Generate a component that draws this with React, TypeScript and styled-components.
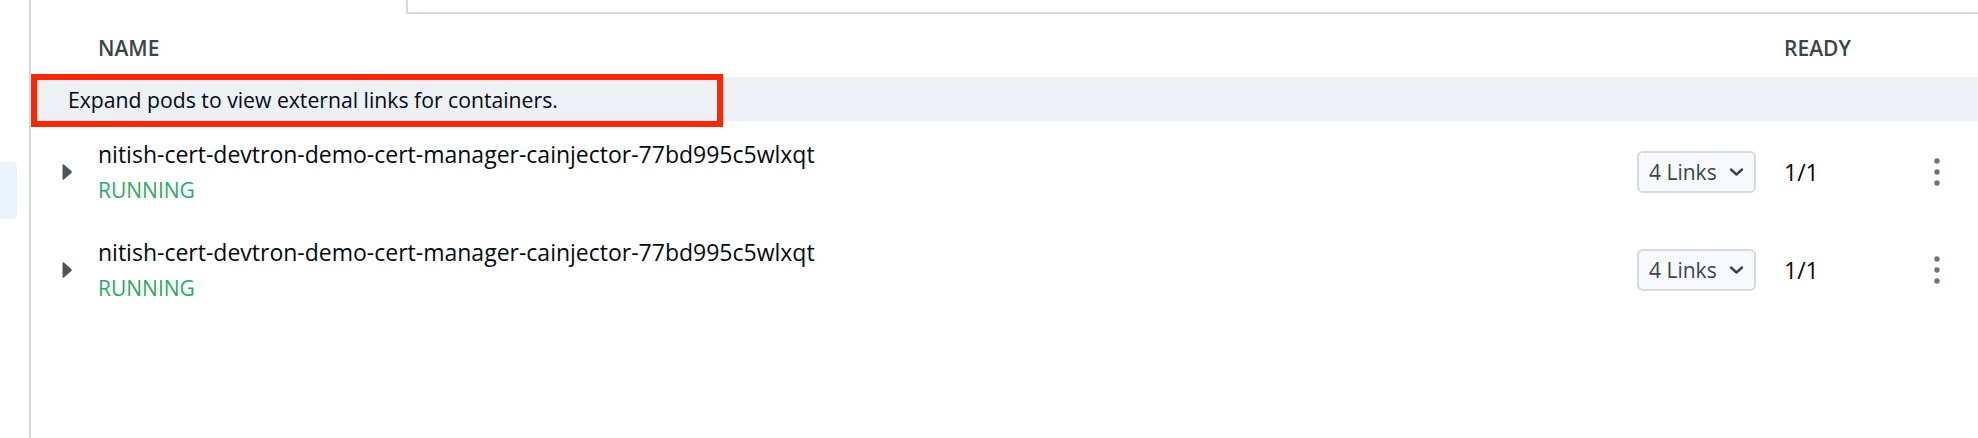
import styled, { createGlobalStyle } from 'styled-components';

const pods = [
	{ name: 'nitish-cert-devtron-demo-cert-manager-cainjector-77bd995c5wlxqt', status: 'RUNNING', links: 4, ready: '1/1' },
	{ name: 'nitish-cert-devtron-demo-cert-manager-cainjector-77bd995c5wlxqt', status: 'RUNNING', links: 4, ready: '1/1' },
];

const GlobalStyle = createGlobalStyle`
	html, body {
		margin: 0;
		padding: 0;
		background: #fff;
	}
	body {
		font-family: 'Open Sans', 'Noto Sans', sans-serif;
		font-size: 21px;
		color: #000a14;
	}
`;

const Page = styled.div`
	display: flex;
	width: 1978px;
	height: 438px;
	overflow: hidden;
`;

const Sidebar = styled.aside`
	width: 29px;
	flex-shrink: 0;
	border-right: 2px solid #d6dae0;
	padding-top: 162px;
	box-sizing: content-box;
`;

const SideTab = styled.div`
	width: 17px;
	height: 57px;
	background: #e8f3ff;
	border-radius: 0 5px 5px 0;
`;

const Main = styled.main`
	flex: 1;
	display: flex;
	flex-direction: column;
	min-width: 0;
`;

const TopStrip = styled.div`
	height: 12px;
	margin-left: 375px;
	border-left: 2px solid #d6dae0;
	border-bottom: 2px solid #d6dae0;
`;

const Row = styled.div<{ $header?: boolean }>`
	display: grid;
	grid-template-columns: 67px 1fr 147px 132px 42px;
	align-items: center;
	padding-right: 20px;
	padding-top: ${(p) => (p.$header ? '19px' : '18px')};
	padding-bottom: 14px;
`;

const HeadCell = styled.div<{ $col: number }>`
	grid-column: ${(p) => p.$col};
	font-size: 21px;
	line-height: 30px;
	font-weight: 600;
	color: #3b444c;
	text-transform: uppercase;
`;

const NoticeBand = styled.div`
	height: 44px;
	background: #edf0f4;
	display: flex;
	align-items: flex-end;
`;

const NoticeMark = styled.div`
	margin-left: 6px;
	width: 680px;
	height: 41px;
	box-sizing: border-box;
	outline: 6px solid #ff2600;
	display: flex;
	align-items: center;
	padding-left: 31px;
	padding-bottom: 2px;
	font-size: 21.2px;
	color: #000a14;
	white-space: nowrap;
`;

const Caret = styled.div`
	padding-left: 30px;
	align-self: center;
	display: flex;
	svg {
		display: block;
	}
`;

const PodInfo = styled.div`
	display: flex;
	flex-direction: column;
	gap: 6px;
	min-width: 0;
`;

const PodName = styled.div`
	font-size: 23px;
	line-height: 30px;
	color: #000a14;
	white-space: nowrap;
`;

const PodStatus = styled.div<{ $status: string }>`
	font-size: 21px;
	line-height: 30px;
	color: ${(p) => (p.$status === 'RUNNING' ? '#1dad70' : '#f33e3e')};
	text-transform: uppercase;
`;

const LinksButton = styled.button`
	width: 119px;
	height: 42px;
	box-sizing: border-box;
	display: flex;
	align-items: center;
	gap: 12px;
	padding: 0 0 0 10px;
	background: #f7fafc;
	border: 2px solid #d6dae0;
	border-radius: 6px;
	font-family: 'Open Sans', sans-serif;
	font-size: 21px;
	color: #3b444c;
	cursor: pointer;
`;

const ReadyCell = styled.div`
	font-size: 23px;
	line-height: 30px;
	color: #000a14;
`;

const MenuDots = styled.div`
	display: flex;
	justify-content: center;
`;

const CaretIcon = () => (
	<svg width='12' height='18' viewBox='0 0 12 18'>
		<path d='M1.5 2.2 Q1.5 0.6 2.9 1.6 L10.4 8 Q11.4 9 10.4 10 L2.9 16.4 Q1.5 17.4 1.5 15.8 Z' fill='#4d555e' />
	</svg>
);

const Chevron = () => (
	<svg width='15' height='10' viewBox='0 0 15 10'>
		<path d='M2 2.5 L7.5 7.5 L13 2.5' fill='none' stroke='#3b444c' strokeWidth='2.4' strokeLinecap='round' strokeLinejoin='round' />
	</svg>
);

const Kebab = () => (
	<svg width='6' height='28' viewBox='0 0 6 28'>
		<circle cx='3' cy='3' r='2.7' fill='#6b747c' />
		<circle cx='3' cy='14' r='2.7' fill='#6b747c' />
		<circle cx='3' cy='25' r='2.7' fill='#6b747c' />
	</svg>
);

const App = () => {
	return (
		<>
			<GlobalStyle />
			<Page>
				<Sidebar>
					<SideTab />
				</Sidebar>
				<Main>
					<TopStrip />
					<Row $header>
						<HeadCell $col={2}>Name</HeadCell>
						<HeadCell $col={4}>Ready</HeadCell>
					</Row>
					<NoticeBand>
						<NoticeMark>Expand pods to view external links for containers.</NoticeMark>
					</NoticeBand>
					{pods.map((pod, i) => (
						<Row key={i}>
							<Caret>
								<CaretIcon />
							</Caret>
							<PodInfo>
								<PodName>{pod.name}</PodName>
								<PodStatus $status={pod.status}>{pod.status}</PodStatus>
							</PodInfo>
							<div>
								<LinksButton>
									{pod.links} Links
									<Chevron />
								</LinksButton>
							</div>
							<ReadyCell>{pod.ready}</ReadyCell>
							<MenuDots>
								<Kebab />
							</MenuDots>
						</Row>
					))}
				</Main>
			</Page>
		</>
	);
};

export default App;
